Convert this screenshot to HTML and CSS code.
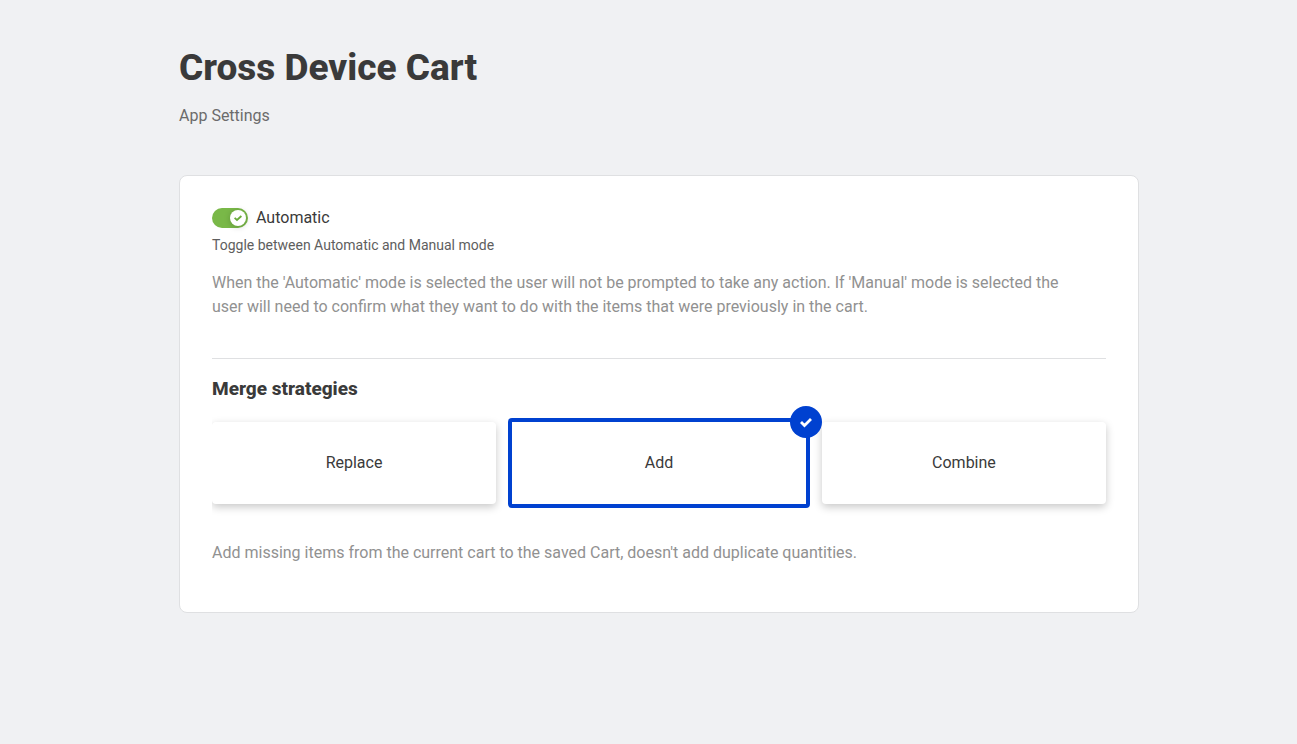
FILE: index.html
```html
<!DOCTYPE html>
<html lang="en">
<head>
<meta charset="utf-8">
<meta name="viewport" content="width=device-width, initial-scale=1">
<title>Cross Device Cart</title>
<link rel="stylesheet" href="styles.css">
</head>
<body>
<main class="page">
  <header class="page-header">
    <h1 class="page-title">Cross Device Cart</h1>
    <p class="page-subtitle">App Settings</p>
  </header>
  <div class="panel">
    <div class="toggle-row">
      <span class="toggle">
        <input class="toggle-input" type="checkbox" id="automatic" aria-describedby="automatic-help" checked>
        <span class="toggle-knob"><svg class="toggle-icon" viewBox="0 0 8 8" aria-hidden="true"><path d="M.6 3.8 3 6 7.4 2" fill="none" stroke="currentColor" stroke-width="1.8"/></svg></span>
      </span>
      <label class="toggle-label" for="automatic">Automatic</label>
    </div>
    <p class="toggle-help" id="automatic-help">Toggle between Automatic and Manual mode</p>
    <p class="description">When the 'Automatic' mode is selected the user will not be prompted to take any action. If 'Manual' mode is selected the user will need to confirm what they want to do with the items that were previously in the cart.</p>
    <hr class="divider">
    <h2 class="section-title" id="strategies">Merge strategies</h2>
    <div class="strategies" role="radiogroup" aria-labelledby="strategies">
      <label class="strategy"><input class="strategy-input" type="radio" name="strategy">Replace</label>
      <label class="strategy strategy-selected"><input class="strategy-input" type="radio" name="strategy" checked>Add
        <span class="badge"><svg class="badge-icon" viewBox="0 0 12 12" aria-hidden="true"><path d="M1 6 4.5 9.6 11 3" fill="none" stroke="currentColor" stroke-width="2.8"/></svg></span>
      </label>
      <label class="strategy"><input class="strategy-input" type="radio" name="strategy">Combine</label>
    </div>
    <p class="description">Add missing items from the current cart to the saved Cart, doesn't add duplicate quantities.</p>
  </div>
</main>
</body>
</html>
```
FILE: styles.css
```css
* {
  box-sizing: border-box;
}

body {
  margin: 0;
  padding: 48px 0 48px 21px;
  background: #f0f1f3;
  color: #3a3a3a;
  font-family: Roboto, "Liberation Sans", sans-serif;
  font-size: 16px;
  line-height: 24px;
}

h1, h2, p {
  margin: 0;
}

.page {
  max-width: 960px;
  margin: 0 auto;
}

.page-header {
  display: grid;
  gap: 16px;
  margin-bottom: 47px;
}

.page-title {
  font-size: 37px;
  line-height: 40px;
  font-weight: 800;
}

.page-subtitle {
  color: #6b6b6b;
}

.panel {
  padding: 30px 32px 47px;
  border: 1px solid #dfe0e2;
  border-radius: 8px;
  background: #fff;
}

.toggle-row {
  display: flex;
  align-items: center;
  gap: 8px;
}

.toggle {
  display: flex;
  position: relative;
}

.toggle-input {
  appearance: none;
  width: 36px;
  height: 20px;
  margin: 0;
  border-radius: 10px;
  background: #79b848;
}

.toggle-knob {
  position: absolute;
  top: 2px;
  right: 2px;
  display: grid;
  place-items: center;
  width: 16px;
  height: 16px;
  border-radius: 50%;
  background: #fff;
  color: #6aac3b;
  box-shadow: 0 1px 6px rgb(0 0 0 / 20%);
  pointer-events: none;
}

.toggle-icon {
  width: 8px;
  height: 8px;
}

.toggle-help {
  margin: 5px 0 16px;
  color: #5e5e5e;
  font-size: 14px;
  line-height: 20px;
}

.description {
  max-width: 880px;
  color: #919191;
}

.divider {
  height: 1px;
  margin: 39px 0 16px;
  border: 0;
  background: #dfe0e2;
}

.section-title {
  font-size: 19px;
  line-height: 28px;
  font-weight: 800;
}

.strategies {
  display: grid;
  grid-template-columns: 16fr 17fr 16fr;
  align-items: center;
  gap: 12px;
  margin: 15px 0 33px;
  clip-path: inset(-16px -16px -16px 0);
}

.strategy {
  position: relative;
  display: grid;
  place-items: center;
  height: 82px;
  border-radius: 4px;
  background: #fff;
  box-shadow: 0 3px 8px rgb(0 0 0 / 22%);
}

.strategy-selected {
  height: 90px;
  border: 4px solid #0041d0;
  box-shadow: none;
}

.strategy-input {
  position: absolute;
  inset: 0;
  margin: 0;
  opacity: 0;
}

.badge {
  position: absolute;
  top: -16px;
  right: -16px;
  z-index: 1;
  display: grid;
  place-items: center;
  width: 32px;
  height: 32px;
  border-radius: 50%;
  background: #0041d0;
  color: #fff;
}

.badge-icon {
  width: 12px;
  height: 12px;
}
```
